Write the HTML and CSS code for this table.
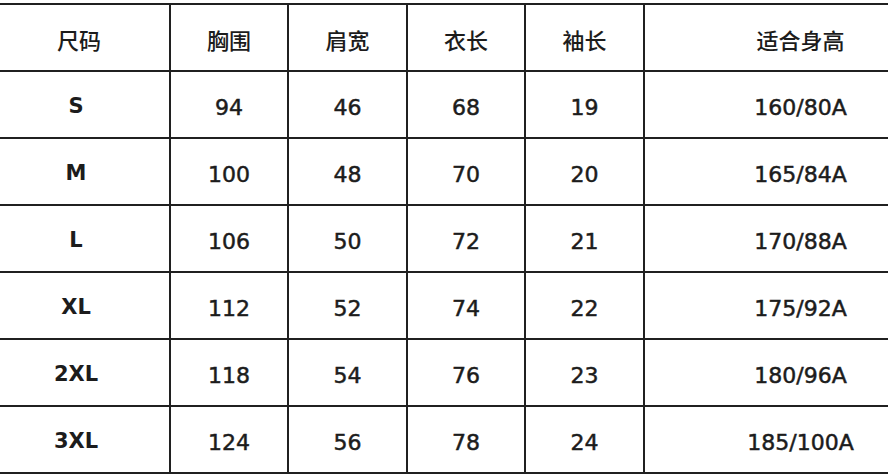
FILE: index.html
```html
<!DOCTYPE html>
<html lang="zh">
<head>
<meta charset="utf-8">
<title>尺码表</title>
<link rel="stylesheet" href="styles.css">
</head>
<body>
<div class="frame">
  <div class="chart">
    <div class="cell head">尺码</div>
    <div class="cell head">胸围</div>
    <div class="cell head">肩宽</div>
    <div class="cell head">衣长</div>
    <div class="cell head">袖长</div>
    <div class="cell head">适合身高</div>

    <div class="cell size">S</div>
    <div class="cell num">94</div>
    <div class="cell num">46</div>
    <div class="cell num">68</div>
    <div class="cell num">19</div>
    <div class="cell num">160/80A</div>

    <div class="cell size">M</div>
    <div class="cell num">100</div>
    <div class="cell num">48</div>
    <div class="cell num">70</div>
    <div class="cell num">20</div>
    <div class="cell num">165/84A</div>

    <div class="cell size">L</div>
    <div class="cell num">106</div>
    <div class="cell num">50</div>
    <div class="cell num">72</div>
    <div class="cell num">21</div>
    <div class="cell num">170/88A</div>

    <div class="cell size">XL</div>
    <div class="cell num">112</div>
    <div class="cell num">52</div>
    <div class="cell num">74</div>
    <div class="cell num">22</div>
    <div class="cell num">175/92A</div>

    <div class="cell size">2XL</div>
    <div class="cell num">118</div>
    <div class="cell num">54</div>
    <div class="cell num">76</div>
    <div class="cell num">23</div>
    <div class="cell num">180/96A</div>

    <div class="cell size">3XL</div>
    <div class="cell num">124</div>
    <div class="cell num">56</div>
    <div class="cell num">78</div>
    <div class="cell num">24</div>
    <div class="cell num">185/100A</div>
  </div>
</div>
</body>
</html>
```

FILE: styles.css
```css
html, body {
  margin: 0;
  padding: 0;
  background: #ffffff;
}

.frame {
  width: 888px;
  height: 475px;
  overflow: hidden;
  background: #ffffff;
}

.chart {
  margin-top: 3px;
  margin-left: -11px;
  width: 967px;
  display: grid;
  grid-template-columns: 180px 116px 117px 116px 117px 311px;
  grid-template-rows: repeat(7, 65px);
  column-gap: 2px;
  row-gap: 2px;
  padding: 2px 0;
  background: #202020;
}

.cell {
  background: #ffffff;
  display: flex;
  align-items: center;
  justify-content: center;
  padding-top: 3px;
  box-sizing: border-box;
  color: #1c1c1c;
}

.head {
  font-family: "Noto Sans CJK SC", "DejaVu Sans", sans-serif;
  font-size: 22px;
  font-weight: 500;
  padding-top: 2px;
}

.size {
  font-family: "DejaVu Sans", sans-serif;
  font-size: 21px;
  font-weight: 700;
  padding-right: 6px;
}

.num {
  font-family: "DejaVu Sans", sans-serif;
  font-size: 22px;
  font-weight: 400;
  -webkit-text-stroke: 0.5px #1c1c1c;
  padding-top: 5px;
}
```
